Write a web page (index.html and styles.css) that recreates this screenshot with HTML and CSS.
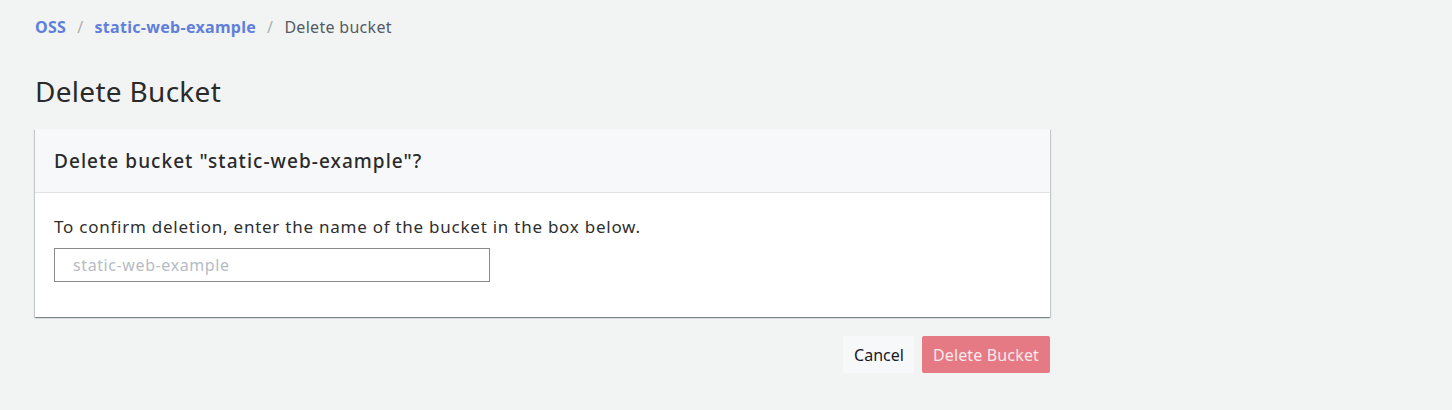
FILE: index.html
```html
<!DOCTYPE html>
<html>
<head>
<meta charset="utf-8">
<link rel="stylesheet" href="styles.css">
</head>
<body>
<div class="page">
  <nav class="crumbs">
    <a class="crumb-link">OSS</a>
    <span class="sep">/</span>
    <a class="crumb-link">static-web-example</a>
    <span class="sep">/</span>
    <span class="crumb-current">Delete bucket</span>
  </nav>
  <h1 class="title">Delete Bucket</h1>
  <div class="card">
    <div class="card-header">Delete bucket "static-web-example"?</div>
    <div class="card-body">
      <p class="hint">To confirm deletion, enter the name of the bucket in the box below.</p>
      <input class="name-input" type="text" placeholder="static-web-example">
    </div>
  </div>
  <div class="actions">
    <button class="btn btn-cancel">Cancel</button>
    <button class="btn btn-danger">Delete Bucket</button>
  </div>
</div>
</body>
</html>
```
FILE: styles.css
```css
html, body { margin: 0; padding: 0; }
body {
  background: #f2f3f3;
  font-family: "Noto Sans", "Open Sans", sans-serif;
  color: #2f2f2f;
}
.page {
  width: 1015px;
  padding: 16px 0 0 35px;
}
.crumbs {
  display: flex;
  align-items: center;
  gap: 11px;
  font-size: 16px;
  height: 22px;
  letter-spacing: 0.3px;
}
.crumb-link { color: #5f7fdb; font-weight: 700; }
.sep { color: #aab0b5; }
.crumb-current { color: #545b64; }
.title {
  margin: 35px 0 0 0;
  font-size: 28px;
  font-weight: 400;
  line-height: 36px;
  letter-spacing: 0.3px;
  color: #2a2a2a;
}
.card {
  margin-top: 20px;
  background: #fff;
  box-shadow: 0 1px 1px 0 rgba(0,28,36,.3), 1px 1px 1px 0 rgba(0,28,36,.15), -1px 1px 1px 0 rgba(0,28,36,.15);
}
.card-header {
  background: #f7f8fa;
  border-bottom: 1px solid #e0e3e6;
  height: 64px;
  box-sizing: border-box;
  padding: 0 19px;
  display: flex;
  align-items: center;
  font-size: 19px;
  font-weight: 500;
  letter-spacing: 1.05px;
  color: #2a2a2a;
}
.card-body { padding: 22px 19px 35px 19px; }
.hint {
  margin: 0 0 9px 0;
  font-size: 17px;
  line-height: 24px;
  letter-spacing: 0.75px;
  color: #2f2f2f;
}
.name-input {
  display: block;
  width: 436px;
  height: 34px;
  box-sizing: border-box;
  border: 1px solid #8a8a8a;
  border-radius: 0;
  padding: 0 18px;
  font-family: inherit;
  font-size: 16px;
  letter-spacing: 0.6px;
  color: #333;
  background: #fff;
  outline: none;
}
.name-input::placeholder { color: #b6bcc3; }
.actions {
  margin-top: 19px;
  display: flex;
  justify-content: flex-end;
  gap: 8px;
}
.btn {
  height: 37px;
  border: none;
  border-radius: 2px;
  font-family: inherit;
  font-size: 16px;
  padding: 0 11px;
  cursor: pointer;
}
.btn-cancel { background: #f7f8fa; color: #16191f; letter-spacing: 0; padding: 0 10px 0 11px; }
.btn-danger { background: #e57a85; color: #fbe9eb; letter-spacing: 0.15px; }
```
